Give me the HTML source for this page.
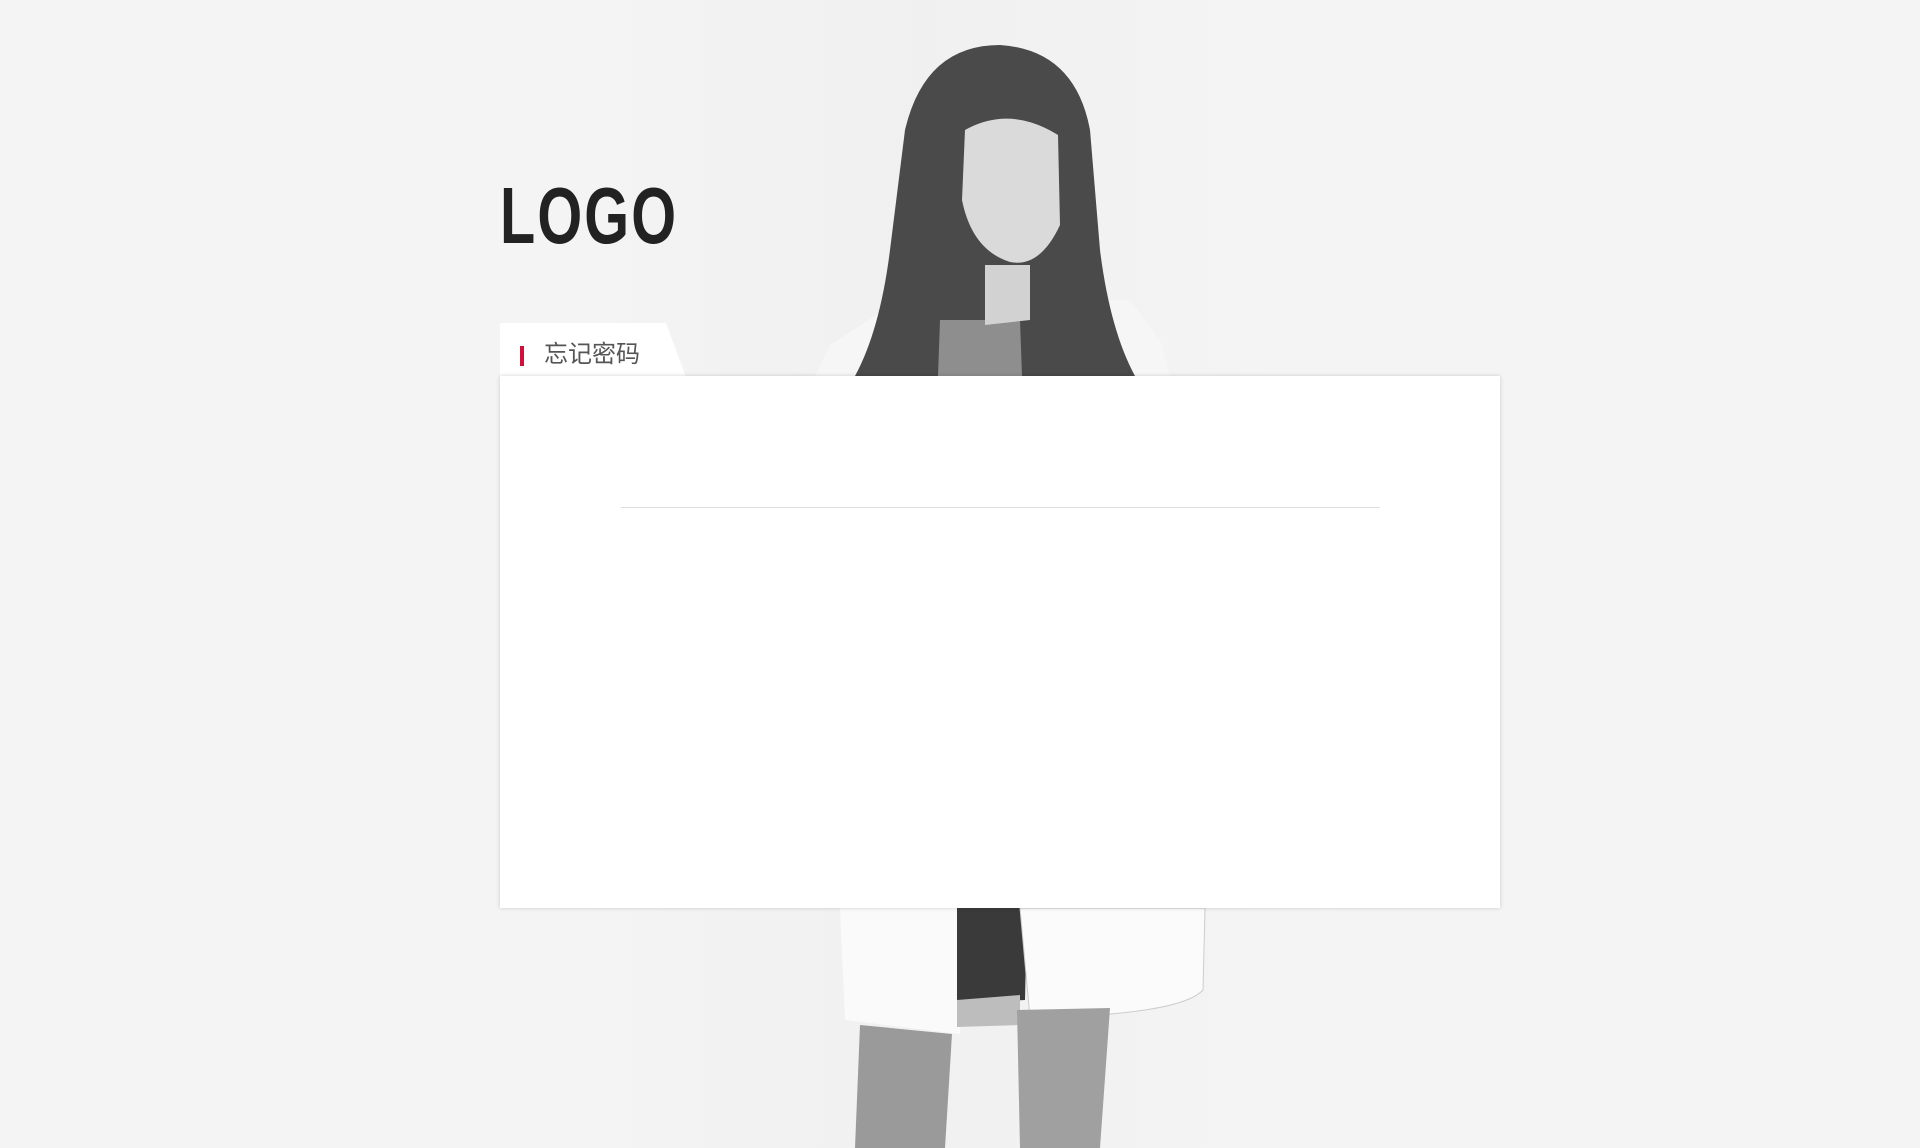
<!DOCTYPE html>
<html><head><meta charset="utf-8"><style>
html,body{margin:0;padding:0;}
body{width:1920px;height:1148px;background:#f4f4f4;position:relative;overflow:hidden;font-family:"Liberation Sans","Noto Sans CJK SC",sans-serif;}
.logo{position:absolute;left:500px;top:176px;font-size:80px;font-weight:bold;color:#222;letter-spacing:3px;line-height:80px;transform:scaleX(0.72);transform-origin:0 0;}
.tab{position:absolute;left:500px;top:323px;width:186px;height:54px;}
.card{position:absolute;left:500px;top:376px;width:1000px;height:532px;background:#fff;box-shadow:0 0 4px rgba(0,0,0,0.18);}
.line{position:absolute;left:121px;top:131px;width:759px;height:1px;background:#ddd;}
.bar{position:absolute;left:520px;top:346px;width:4px;height:20px;background:#d0103a;}
.tt{position:absolute;left:544px;top:340px;font-size:24px;color:#555;line-height:30px;}
</style></head><body>
<svg width="1920" height="1148" style="position:absolute;left:0;top:0">
<defs><linearGradient id="bg" x1="0" y1="0" x2="1" y2="0"><stop offset="0" stop-color="#f5f5f5"/><stop offset="0.5" stop-color="#eeeeee"/><stop offset="1" stop-color="#f5f5f5"/></linearGradient></defs>
<rect x="500" y="0" width="840" height="1148" fill="url(#bg)" opacity="0.6"/>
<path d="M815 376 L830 345 L900 300 L1130 300 L1160 340 L1170 376 Z" fill="#f6f6f6"/>
<path d="M855 376 Q880 330 890 250 L905 130 Q925 45 1000 45 Q1075 50 1090 130 L1100 250 Q1110 330 1135 376 Z" fill="#4a4a4a"/>
<path d="M940 320 L1020 320 L1022 376 L938 376 Z" fill="#8e8e8e"/>
<path d="M965 130 Q1010 105 1058 135 L1060 225 Q1040 268 1010 262 Q972 250 962 200 Z" fill="#dadada"/>
<path d="M985 265 L1030 265 L1030 320 L985 325 Z" fill="#d2d2d2"/>
<path d="M840 908 L958 908 L960 1034 L845 1020 Z" fill="#fafafa"/>
<path d="M957 908 L1027 908 L1025 1000 L957 1004 Z" fill="#3a3a3a"/>
<path d="M957 1000 L1020 995 L1020 1025 L957 1027 Z" fill="#bdbdbd"/>
<path d="M1020 908 L1205 908 L1203 990 Q1180 1015 1030 1018 Z" fill="#fbfbfb" stroke="#ccc" stroke-width="1"/>
<path d="M860 1025 L952 1034 L945 1148 L855 1148 Z" fill="#9a9a9a"/>
<path d="M1017 1010 L1110 1008 L1100 1148 L1020 1148 Z" fill="#a0a0a0"/>
</svg>
<div class="logo">LOGO</div>
<svg class="tab" viewBox="0 0 186 54"><path d="M0 1 Q0 0 2 0 L166 0 L186 54 L0 54 Z" fill="#fff"/></svg>
<div class="bar"></div>
<div class="tt">忘记密码</div>
<div class="card"><div class="line"></div></div>
</body></html>
